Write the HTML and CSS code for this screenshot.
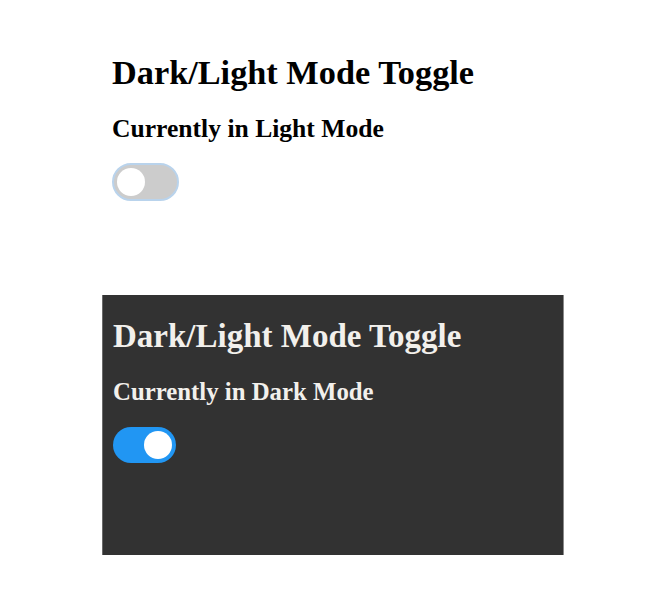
FILE: index.html
```html
<!DOCTYPE html>
<html>
<head>
<meta charset="utf-8">
<link rel="stylesheet" href="styles.css">
</head>
<body>
  <section class="panel light">
    <h1 class="title">Dark/Light Mode Toggle</h1>
    <h2 class="status">Currently in Light Mode</h2>
    <label class="switch switch-off focused"><span class="knob"></span></label>
  </section>
  <section class="panel dark">
    <h1 class="title">Dark/Light Mode Toggle</h1>
    <h2 class="status">Currently in Dark Mode</h2>
    <label class="switch switch-on"><span class="knob"></span></label>
  </section>
</body>
</html>
```
FILE: styles.css
```css
html, body {
  margin: 0;
  padding: 0;
  background: #ffffff;
}
body {
  font-family: "Liberation Serif", "Times New Roman", serif;
  width: 664px;
  height: 589px;
  overflow: hidden;
}
.panel {
  display: flex;
  flex-direction: column;
  align-items: flex-start;
}
.title, .status {
  margin: 0;
  font-weight: bold;
  white-space: nowrap;
}
.light {
  padding: 52px 0 0 112px;
  height: 295px;
  box-sizing: border-box;
  color: #000;
}
.light .title {
  font-size: 34.3px;
  line-height: 40px;
}
.light .status {
  font-size: 25.6px;
  line-height: 30px;
  margin-top: 22px;
}
.light .switch {
  margin-top: 19px;
}
.dark {
  margin-left: 102px;
  width: 462px;
  height: 260px;
  box-sizing: border-box;
  padding: 22px 0 0 10px;
  background: #323232;
  border-left: 1px solid #6a6a6a;
  border-right: 1px solid #8a8a8a;
  color: #f2f0ec;
}
.dark .title {
  font-size: 33px;
  line-height: 38px;
}
.dark .status {
  font-size: 24.8px;
  line-height: 29px;
  margin-top: 22px;
}
.dark .switch {
  margin-top: 21px;
}
.switch {
  display: flex;
  align-items: center;
  box-sizing: border-box;
  border-radius: 20px;
}
.knob {
  display: block;
  width: 28px;
  height: 28px;
  border-radius: 50%;
  background: #ffffff;
}
.switch-off {
  width: 67px;
  height: 38px;
  background: #cccccc;
  border: 2px solid #b9d3ec;
  padding-left: 3px;
  justify-content: flex-start;
}
.switch-on {
  width: 63px;
  height: 36px;
  background: #2196f3;
  padding-right: 4px;
  justify-content: flex-end;
}
```
